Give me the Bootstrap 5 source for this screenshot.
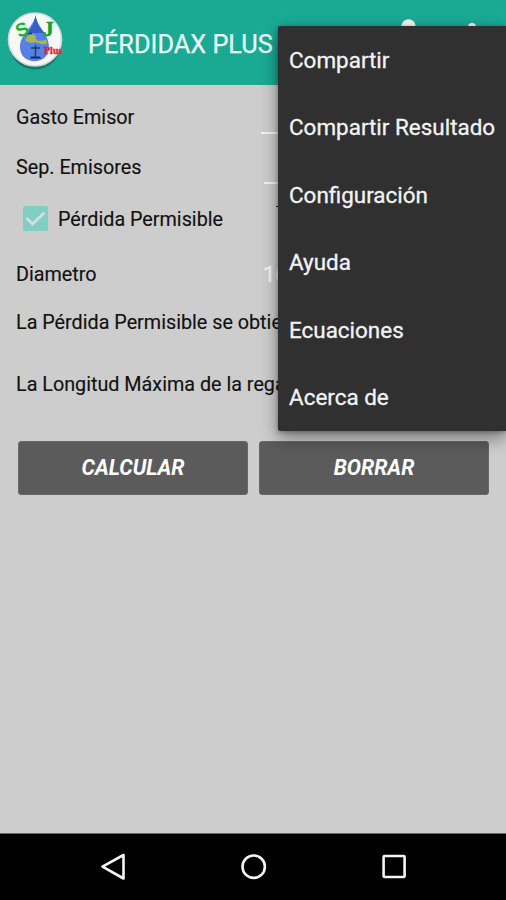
<!DOCTYPE html>
<html lang="es">
<head>
<meta charset="utf-8">
<meta name="viewport" content="width=device-width, initial-scale=1">
<title>Pérdidax Plus</title>
<link href="https://cdn.jsdelivr.net/npm/bootstrap@5.3.0/dist/css/bootstrap.min.css" rel="stylesheet">
<style>
  body { font-family: Roboto, sans-serif; background: #cdcdcd; color: #111; }
  .screen { width: 506px; height: 900px; overflow: hidden; }
  .app-bar { height: 85px; background: #1aaa94; padding: 0 0 4px 5px; }
  .app-bar svg { overflow: visible; }
  .app-title { font-size: 25.3px; line-height: 30px; color: #e9fbf6; margin: 9px 0 0 22px; -webkit-text-stroke: .25px #e9fbf6; }
  .form-area { padding: 8px 16px 0 16px; font-size: 19.75px; line-height: 24px; -webkit-text-stroke: .15px #111; }
  .line-a { height: 50px; }
  .line-b { height: 49px; }
  .line-check { height: 55px; }
  .line-diam { height: 56px; }
  .line-loss { height: 39px; }
  .line-length { height: 85px; }
  .entry { align-self: flex-end; height: 2px; background: #f4f4f4; margin-bottom: 9px; }
  .entry-a { width: 229px; }
  .entry-b { width: 226px; margin-bottom: 8px; }
  .tick-box { margin: 0 9px 0 6px; }
  .value { width: 227px; color: #f4f4f4; font-size: 22px; -webkit-text-stroke: .5px #f4f4f4; }
  .dash { width: 10px; height: 1px; background: #222; margin: 0 204px 27px 0; }
  .action { height: 54px; border-radius: 3px; background: #5b5b5c; border: 1px solid #68686a; color: #fff; font-size: 21.2px; padding: 0; -webkit-text-stroke: 0; --bs-btn-hover-bg: #5b5b5c; }
  .actions { gap: 11px; padding: 0 1px 0 2px; margin-top: 14px; }
  .overflow-menu { top: 26px; left: 278px; width: 228px; height: 405px; background: #303030; border-radius: 2px 0 0 2px; box-shadow: 0 7px 17px rgba(0,0,0,.42), 0 1px 4px rgba(0,0,0,.3); z-index: 5; }
  .overflow-menu a { height: 67.5px; padding: .4px 0 0 11px; font-size: 22.45px; line-height: 28px; color: #f3f3f3; white-space: nowrap; text-decoration: none; -webkit-text-stroke: .3px #f3f3f3; }
  .system-bar { height: 67px; background: #000; border-top: 1px solid #666; }
</style>
</head>
<body>
<div class="screen position-relative d-flex flex-column">
  <header class="app-bar d-flex align-items-center">
    <svg width="61" height="64" viewBox="0 0 61 64" aria-hidden="true">
      <ellipse cx="30" cy="34.500" rx="26" ry="26" fill="#073f38" opacity=".45"/>
      <circle cx="30" cy="30.500" r="26.500" fill="#f6f7f7" stroke="#d3d9da" stroke-width="1.6"/>
      <path d="M30.500 6C29 18 15 25 15 38c0 19 29 19 29 0C44 25 32 18 30.500 6Z" fill="#5580e6"/>
      <path d="M30.500 6C29 15 27 19 22 24h18C34 19 32 15 30.500 6Z" fill="#365cc8"/>
      <path d="M20 31c2-5 7-8 11-4-1 4 1 3 2 5l8-1c3 3 0 5-5 4l-6-2c-4 2-8 0-10-2Z" fill="#a6b94a"/>
      <path d="M20 24.500h7M26 39h9M30.500 36v12" fill="none" stroke="#203d60" stroke-width="1.5"/>
      <path d="M26 47.500h9l1 2H25z" fill="#172b64"/>
      <text x="11" y="27" font-family="Liberation Sans, sans-serif" font-size="19" font-weight="700" fill="#16b82b" transform="rotate(-24 17 21)">S</text>
      <text x="38.500" y="26.500" font-family="Liberation Serif, serif" font-size="20" font-weight="700" fill="#139f24" stroke="#139f24" stroke-width=".6">J</text>
      <text x="39" y="45" font-family="Liberation Serif, serif" font-size="10" font-weight="700" fill="#e52432" stroke="#e52432" stroke-width=".4">Plus</text>
    </svg>
    <h1 class="app-title fw-normal">PÉRDIDAX PLUS</h1>
    <svg class="ms-auto me-4" width="90" height="40" viewBox="0 0 90 40" aria-hidden="true">
      <circle cx="16.500" cy="5.200" r="7" fill="#f5f5f5"/>
      <circle cx="80" cy="6" r="4" fill="#f5f5f5"/>
    </svg>
  </header>

  <main class="form-area flex-grow-1">
    <div class="line-a d-flex align-items-center justify-content-between"><span>Gasto Emisor</span><span class="entry entry-a"></span></div>
    <div class="line-b d-flex align-items-center justify-content-between"><span>Sep. Emisores</span><span class="entry entry-b"></span></div>
    <div class="line-check d-flex align-items-center justify-content-between">
      <span class="d-flex align-items-center">
        <svg class="tick-box" width="27" height="27" viewBox="0 0 27 27" aria-hidden="true"><rect x="1" y="0" width="25" height="25" rx="1.5" fill="#80cfc3"/><path d="M4.500 12l6 6L22.500 6.500" fill="none" stroke="#dcdcdc" stroke-width="2.8"/></svg>
        <span>Pérdida Permisible</span>
      </span>
      <span class="dash"></span>
    </div>
    <div class="line-diam d-flex align-items-center justify-content-between"><span>Diametro</span><span class="value">16</span></div>
    <div class="line-loss d-flex align-items-center text-nowrap"><span>La Pérdida Permisible se obtie</span></div>
    <div class="line-length d-flex align-items-center text-nowrap"><span>La Longitud Máxima de la rega</span></div>
    <div class="actions d-flex">
      <button type="button" class="action btn flex-fill w-50 fw-bold fst-italic">CALCULAR</button>
      <button type="button" class="action btn flex-fill w-50 fw-bold fst-italic">BORRAR</button>
    </div>
  </main>

  <nav class="overflow-menu position-absolute d-flex flex-column">
    <a href="#" class="d-flex align-items-center">Compartir</a>
    <a href="#" class="d-flex align-items-center">Compartir Resultado</a>
    <a href="#" class="d-flex align-items-center">Configuración</a>
    <a href="#" class="d-flex align-items-center">Ayuda</a>
    <a href="#" class="d-flex align-items-center">Ecuaciones</a>
    <a href="#" class="d-flex align-items-center">Acerca de</a>
  </nav>

  <footer class="system-bar">
    <svg class="d-block" width="506" height="66" viewBox="0 0 506 66" fill="none" stroke="#f4f4f4" stroke-width="2.6" stroke-linejoin="round" aria-hidden="true">
      <path d="M123.500 21v23.500L102.500 32.700Z"/>
      <circle cx="253.700" cy="32.700" r="11.200"/>
      <rect x="383.600" y="22" width="21" height="21" rx="1"/>
    </svg>
  </footer>
</div>
<script src="https://cdn.jsdelivr.net/npm/bootstrap@5.3.0/dist/js/bootstrap.bundle.min.js"></script>
</body>
</html>
